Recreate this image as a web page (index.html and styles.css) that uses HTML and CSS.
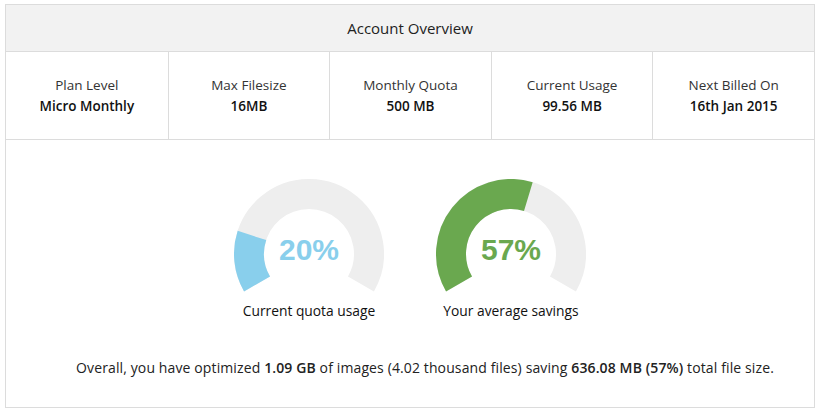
FILE: index.html
```html
<!DOCTYPE html>
<html lang="en">
<head>
    <meta charset="UTF-8">
    <title>Account Overview</title>
    <link rel="stylesheet" href="styles.css">
</head>
<body>
    <div class="panel">
        <div class="panel-head">Account Overview</div>

        <div class="stats">
            <div class="stat">
                <span class="stat-label">Plan Level</span>
                <span class="stat-value">Micro Monthly</span>
            </div>
            <div class="stat">
                <span class="stat-label">Max Filesize</span>
                <span class="stat-value">16MB</span>
            </div>
            <div class="stat">
                <span class="stat-label">Monthly Quota</span>
                <span class="stat-value">500 MB</span>
            </div>
            <div class="stat">
                <span class="stat-label">Current Usage</span>
                <span class="stat-value">99.56 MB</span>
            </div>
            <div class="stat">
                <span class="stat-label">Next Billed On</span>
                <span class="stat-value">16th Jan 2015</span>
            </div>
        </div>

        <div class="panel-body">
            <div class="gauges">
                <!-- quota gauge: 20% of a 240deg arc -->
                <div class="gauge">
                    <svg class="gauge-svg" width="150" height="114" viewBox="0 0 150 114">
                        <path class="track" d="M23.04 105 A60 60 0 1 1 126.96 105"/>
                        <path class="fill-blue" d="M23.04 105 A60 60 0 0 1 17.94 56.46"/>
                        <text class="pct pct-blue" x="75" y="81" text-anchor="middle">20%</text>
                    </svg>
                    <div class="gauge-label">Current quota usage</div>
                </div>

                <!-- savings gauge: 57% -->
                <div class="gauge">
                    <svg class="gauge-svg" width="150" height="114" viewBox="0 0 150 114">
                        <path class="track" d="M23.04 105 A60 60 0 1 1 126.96 105"/>
                        <path class="fill-green" d="M23.04 105 A60 60 0 0 1 92.34 17.57"/>
                        <text class="pct pct-green" x="75" y="81" text-anchor="middle">57%</text>
                    </svg>
                    <div class="gauge-label">Your average savings</div>
                </div>
            </div>

            <p class="summary">Overall, you have optimized <b>1.09 GB</b> of images (4.02 thousand files) saving <b>636.08 MB (57%)</b> total file size.</p>
        </div>
    </div>
</body>
</html>
```

FILE: styles.css
```css
body {
    margin: 4px 7px 0 5px;
    background: #fff;
    font-family: "Open Sans", Lato, sans-serif;
    font-size: 13.5px;
    color: #222;
}
.panel {
    width: 810px;
    box-sizing: border-box;
    border: 1px solid #dcdcdc;
}
.panel-head {
    height: 46px;
    line-height: 46px;
    text-align: center;
    font-size: 15px;
    color: #222;
    background: #f2f2f2;
    border-bottom: 1px solid #dcdcdc;
}
.stats {
    display: grid;
    grid-template-columns: repeat(5, 1fr);
    border-bottom: 1px solid #dcdcdc;
}
.stat {
    height: 87px;
    display: flex;
    flex-direction: column;
    align-items: center;
    justify-content: center;
    gap: 3px;
    border-left: 1px solid #dcdcdc;
}
.stat:first-child {
    border-left: none;
}
.stat-label {
    color: #333;
}
.stat-value {
    color: #111;
    font-weight: 600;
}
.panel-body {
    padding-top: 39px;
}
.gauges {
    display: flex;
    justify-content: center;
    gap: 52px;
}
.gauge {
    width: 150px;
    display: flex;
    flex-direction: column;
    align-items: center;
}
.gauge-svg {
    display: block;
}
.track, .fill-blue, .fill-green {
    fill: none;
    stroke-width: 30;
}
.track { stroke: #eeeeee; }
.fill-blue { stroke: #89cfec; }
.fill-green { stroke: #6aa84f; }
.pct {
    font-family: "Liberation Sans", Arial, sans-serif;
    font-weight: 700;
    font-size: 30px;
}
.pct-blue { fill: #89cfec; }
.pct-green { fill: #6aa84f; }
.gauge-label {
    margin-top: 8px;
    font-size: 13.8px;
    white-space: nowrap;
    color: #111;
}
.summary {
    margin: 38px 0 30px;
    padding-left: 30px;
    font-size: 14px;
    letter-spacing: 0.12px;
    text-align: center;
}
.summary b {
    font-weight: 600;
}
```
